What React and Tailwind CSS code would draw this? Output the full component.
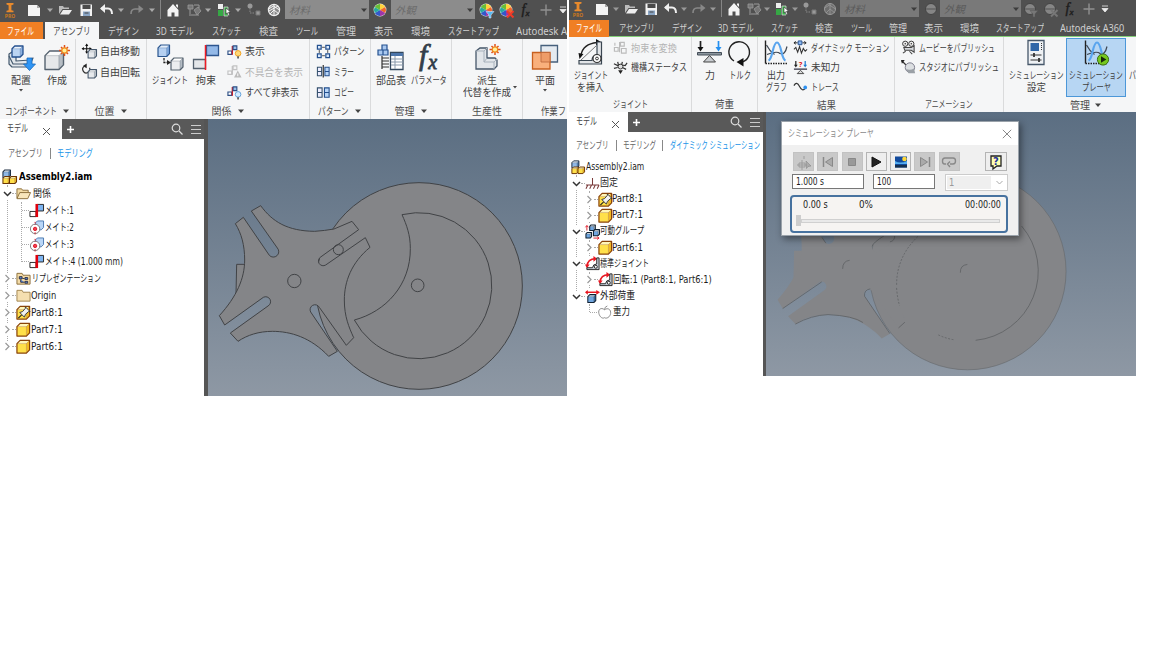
import React, { useLayoutEffect, useRef, useState } from "react";

/* Text squeezed horizontally to the width of its box, like the narrow UI face. */
function Fit({ className = "", children }) {
  const outer = useRef(null);
  const inner = useRef(null);
  const [scale, setScale] = useState(1);
  useLayoutEffect(() => {
    setScale(outer.current.clientWidth / inner.current.offsetWidth);
  }, [children]);
  return (
    <span ref={outer} className={"block shrink-0 whitespace-nowrap " + className}>
      <span ref={inner} className="inline-block origin-left" style={{ transform: `scaleX(${scale})` }}>
        {children}
      </span>
    </span>
  );
}

const Svg = ({ w = 16, h = 16, className = "size-4", children }) => (
  <svg viewBox={`0 0 ${w} ${h}`} className={"block shrink-0 overflow-visible " + className} fill="none">
    {children}
  </svg>
);
const Big = ({ children }) => <Svg w={28} h={28} className="size-7">{children}</Svg>;
const Caret = ({ className = "text-[#444]" }) => (
  <Svg w={8} h={8} className={"size-2 " + className}><path d="M1 2.5h6L4 6z" fill="currentColor" /></Svg>
);
const TinyCaret = () => (
  <Svg w={8} h={8} className="size-2"><path d="M2 3h4L4 5.5z" fill="#444" /></Svg>
);

/* ---------- shared shapes ---------- */
const Cube = ({ x = 0, y = 0, s = 10, fill = "#e6e9ec", top = "#fff", side = "#b4bcc4", stroke = "#44566a", sw = 1.1 }) => {
  const d = s * 0.25;
  const f = s - d;
  return (
    <g strokeLinejoin="round">
      <path d={`M${x} ${y + d}h${f}v${f}h${-f}z`} fill={fill} />
      <path d={`M${x} ${y + d}l${d} ${-d}h${f}l${-d} ${d}z`} fill={top} />
      <path d={`M${x + f} ${y + d}l${d} ${-d}v${f}l${-d} ${d}z`} fill={side} />
      <path d={`M${x} ${y + d}h${f}v${f}M${x + f} ${y + d}l${d} ${-d}`} stroke={stroke} strokeWidth=".7" opacity=".45" />
      <path d={`M${x} ${y + d}l${d} ${-d}h${f}v${f}l${-d} ${d}h${-f}z`} stroke={stroke} strokeWidth={sw} />
    </g>
  );
};
const Spark = ({ x, y }) => (
  <g>
    <path d={`M${x} ${y - 5.500}v11M${x - 5.500} ${y}h11M${x - 3.500} ${y - 3.500}l7 7M${x + 3.500} ${y - 3.500}l-7 7`} stroke="#e0501c" strokeWidth="1.500" />
    <circle cx={x} cy={y} r="2.700" fill="#fff09a" stroke="#f08a1c" strokeWidth="1.200" />
  </g>
);

/* ---------- title bar icons ---------- */
const q = {
  logo: <Svg><path d="M4.5 1h7v1.600L9.400 3.200v5l2.100.6v1.500h-7V8.800l2.100-.6v-5l-2.100-.6z" fill="#e88a2c" /><text x="8" y="16" textAnchor="middle" fontSize="5" fontWeight="700" fill="#c9781f" fontFamily="Noto Sans">PRO</text></Svg>,
  new: <Svg><path d="M2 3h9l3 3v8H2z" fill="#f4f4f4" /><path d="M11 3v3h3z" fill="#aaa" /></Svg>,
  open: <Svg><path d="M2 12V4h4l1 1.500h5V7H5.500z" fill="#bbb" /><path d="M3 12.500L6 8h9l-3 4.500z" fill="#eee" /></Svg>,
  save: <Svg><path d="M2.500 2.500h11.500v11.500H2.500z" fill="#f2f2f2" /><path d="M4.500 3h8v4h-8z" fill="#4a4a4a" /><path d="M5 9.500h7v4.500H5z" fill="#8aa5c4" /><path d="M6.500 11h4" stroke="#444" /></Svg>,
  undo: <Svg><path d="M3 6.500h7q4 0 4 5.500" stroke="#f0f0f0" strokeWidth="2" /><path d="M7 2L2 6.500 7 11z" fill="#f0f0f0" /></Svg>,
  redo: <Svg><path d="M13 7H6q-4 0-4 5" stroke="#888" strokeWidth="1.600" /><path d="M9.500 3l5 4-5 4z" fill="#888" /></Svg>,
  home: <Svg><path d="M2.500 8L8 2l5.500 6v6.500H9.500v-4h-3v4h-4z" fill="#f4f4f4" /><path d="M11 2.500h2V6l-2-2z" fill="#f4f4f4" /></Svg>,
  link: <Svg><path d="M2 3h5v4H2zM8 8l4-3 3 4-4 4z" fill="#777" stroke="#999" strokeWidth=".8" /><path d="M3 13h10M4 7v5M8 3h5v3" stroke="#999" /></Svg>,
  green: <Svg><path d="M2 2h5v5H2z" fill="#eee" /><path d="M2 8h5v6H2z" fill="#36a845" /><path d="M8 5h4v9H8z" fill="#3cb44b" stroke="#ddd" strokeWidth=".7" /><path d="M10 6l4.500 4-2 .3 1.200 3-1.500.4-1-3-1.200 1.300z" fill="#fff" stroke="#333" strokeWidth=".6" /></Svg>,
  tree: <Svg><circle cx="4" cy="4" r="2.500" fill="#999" /><path d="M4 6v5h4" stroke="#888" strokeDasharray="1.500 1" /><path d="M10 9h4v4h-4z" fill="#999" stroke="#777" /></Svg>,
  globe: <Svg><circle cx="8" cy="8" r="5.600" fill="#8a8a8a" stroke="#eee" strokeWidth="1.200" /><path d="M2.500 7l5-3 6 4M4 12l4-4 5 4M8 2v12M3 9l9-5" stroke="#f4f4f4" strokeWidth="1" /></Svg>,
  globeDim: <Svg><circle cx="8" cy="8" r="5.500" fill="#6d6d6d" stroke="#999" /><path d="M2.500 7l5-3 6 4M4 12l4-4 5 4M8 2v12" stroke="#999" strokeWidth=".8" /></Svg>,
  plus: <Svg><path d="M8 2.500v11M2.500 8h11" stroke="#909090" strokeWidth="1.400" /></Svg>,
  fx: <Svg><text x="7.500" y="12" textAnchor="middle" fontSize="14" fontStyle="italic" stroke="#1d1d1d" strokeWidth=".4" fill="#1d1d1d" fontFamily="Liberation Serif">f<tspan fontSize="9" dy="2">x</tspan></text></Svg>,
};
const Ball = ({ dim, mark }) => (
  <Svg>
    {dim ? (
      <g><circle cx="8" cy="8" r="5.500" fill="#858585" stroke="#444" /><path d="M3 8h10" stroke="#6c6c6c" strokeWidth="2" /></g>
    ) : (
      <g>
        <circle cx="8" cy="8" r="6.400" fill="#eee" />
        <path d="M8 8V2A6 6 0 0 1 13.200 5z" fill="#ffd23c" /><path d="M8 8l5.200-3a6 6 0 0 1 0 6z" fill="#f0662a" />
        <path d="M8 8l5.200 3A6 6 0 0 1 8 14z" fill="#9d35a8" /><path d="M8 8v6a6 6 0 0 1-5.200-3z" fill="#3458c8" />
        <path d="M8 8l-5.200 3a6 6 0 0 1 0-6z" fill="#28a9a0" /><path d="M8 8L2.800 5A6 6 0 0 1 8 2z" fill="#69bd36" />
      </g>
    )}
    {mark === "down" && <path d="M8 9.500h8l-3 3.500v3h-2v-3z" fill={dim ? "#777" : "#54b9f2"} stroke={dim ? "#555" : "#eef"} strokeWidth=".5" />}
    {mark === "x" && <path d="M9 9l6.500 6.500m0-6.500L9 15.500" stroke={dim ? "#777" : "#f03a26"} strokeWidth="2" />}
  </Svg>
);
const Slot = ({ c = "", children }) => <div className={"flex shrink-0 items-center " + c}>{children}</div>;
const Combo = ({ c, text, dim }) => (
  <div className={"flex shrink-0 items-center justify-between pl-1 pr-[1px] italic " + (dim ? "bg-[#797979] text-[#5c5c5c] " : "bg-[#8c8c8c] text-[#6c6c6c] ") + c}>
    <Fit className="w-[21px]">{text}</Fit>
    <Caret className="text-[#3c3c3c]" />
  </div>
);
const LC = "text-[#aaa]";

/* ---------- ribbon icons ---------- */
const pairGlyph = (c1 = "#c8202c", c2 = "#2d4f85", f = "#9bc0ec") => (
  <g><path d="M1 7.500h4v3.500H1z" stroke={c2} strokeWidth="1.200" fill="#fff" /><path d="M5.700 2v9.500" stroke={c1} strokeWidth="1.400" /><path d="M6.500 2h4v4h-4z" fill={f} stroke={c2} strokeWidth="1.200" /></g>
);
const bulb = (c, s) => <g><circle cx="11.800" cy="10" r="3" fill={c} stroke={s} strokeWidth="1" /><path d="M11.800 13v2.500" stroke="#555" strokeWidth="1.800" /></g>;
const curves = (
  <g>
    <path d="M3.500 1.500v23" stroke="#222" strokeWidth="1.400" /><path d="M3.500 24.500H26" stroke="#222" strokeWidth="1.400" strokeDasharray="1.500 1" />
    <path d="M4.500 6q3 6 8 9.500M5 15.500q10-4 13-1 5 2 7-7" stroke="#3d4652" strokeWidth="1.200" />
    <path d="M6.500 21.500C11 20 10.500 3.500 15 3.500S19 20 23.500 21.500" stroke="#5aa5ee" strokeWidth="2.200" />
  </g>
);
const ic = {
  place: <Big><path d="M2 10l3-2h4v9l14-1 3-2-4 9H5l-3-3z" fill="#e2e7ec" stroke="#44596e" strokeWidth="1.200" strokeLinejoin="round" /><path d="M2 12l4 8h16" stroke="#44596e" strokeWidth="1.200" /><Cube x={5} y={2} s={11} fill="#bcd5f3" top="#eaf3fd" side="#8bb1e0" stroke="#24508f" sw={1.300} /><path d="M20 14h5v6h3.500L22.500 26.500 16.500 20H20z" fill="#2f95f5" stroke="#1868b8" strokeWidth=".8" /></Big>,
  create: <Big><Cube x={2} y={7} s={18.500} fill="#e6e8ea" top="#fbfbfb" side="#b7bec5" stroke="#55626f" sw={1.400} /><Spark x={21.500} y={6.500} /></Big>,
  move: <Svg><path d="M5 .5v9M.5 5h9" stroke="#111" strokeWidth="1.100" /><path d="M5-.5L3.300 2h3.400zM5 10.500L3.300 8h3.400zM-.5 5L2 3.300v3.400zM10.500 5L8 3.300v3.400z" fill="#111" /><Cube x={6.500} y={6} s={9} /></Svg>,
  rotate: <Svg><path d="M2.500 2.500A3.800 3.800 0 1 0 8 4" stroke="#333" strokeWidth="1.300" /><path d="M5-.5v5L1 2z" fill="#222" /><Cube x={6.500} y={6} s={9} /></Svg>,
  joint: <Big><Cube x={2} y={1} s={11.500} fill="#b5d0f1" top="#e2eefb" side="#7fa9de" stroke="#2a568f" sw={1.200} /><Cube x={15} y={14} s={12} fill="#eceef0" stroke="#55626f" sw={1.200} /><path d="M8 14v4.500h4" stroke="#222" strokeWidth="1.300" strokeDasharray="2.500 1" /><path d="M11 16l4 2.500-4 2.500z" fill="#222" /></Big>,
  constrain: <Big><path d="M1.500 15.500h12v9h-12z" fill="#e4e7ea" stroke="#55626f" strokeWidth="1.300" /><path d="M14.500 1.500h12v10h-12z" fill="#93b9e8" stroke="#2d568f" strokeWidth="1.300" /><path d="M13.500 1v25" stroke="#ee1c25" strokeWidth="1.500" /></Big>,
  show: <Svg>{pairGlyph()}{bulb("#ffd878", "#f2a01e")}</Svg>,
  sick: <Svg><g opacity=".4">{pairGlyph("#777", "#777", "#eee")}</g><path d="M11.500 7l4 7.500h-8z" fill="#bbb" /><path d="M11.500 10v3" stroke="#fff" /></Svg>,
  hide: <Svg>{pairGlyph()}{bulb("#d5ecff", "#5f9ed8")}</Svg>,
  pattern: <Svg><path d="M1.500 1.500h4v4h-4zM10.500 1.500h4v4h-4zM1.500 10.500h4v4h-4zM10.500 10.500h4v4h-4z" stroke="#24508f" strokeWidth="1.300" fill="#dcebfc" /><path d="M6.500 3.500h3M12.500 6.500v3M3.500 6.500v3M6.500 12.500h3" stroke="#444" /></Svg>,
  mirror: <Svg><path d="M1.500 3.500H6v4.500H1.500zM1.500 8H6v4.500H1.500z" stroke="#34506e" strokeWidth="1.100" fill="#eef" /><path d="M9.500 3.500H14V8H9.500zM9.500 8H14v4.500H9.500z" stroke="#24508f" strokeWidth="1.100" fill="#b7d4f6" /><path d="M7.700 1v13.500" stroke="#111" strokeWidth="1.100" /></Svg>,
  copy: <Svg><path d="M1.500 3H6.500v5H1.500zM1.500 8H6.500v5H1.500z" stroke="#34506e" strokeWidth="1.200" fill="#eef" /><path d="M9 3H14v5H9zM9 8H14v5H9z" stroke="#24508f" strokeWidth="1.200" fill="#b7d4f6" /></Svg>,
  bom: <Big><path d="M5 1h5v5H5zM1 6h5v5H1zM6 6h5v5H6z" fill="#a9c8ef" stroke="#24508f" strokeWidth="1.200" /><path d="M5 14h7M5 17h7M5 20h7M5 23h7M5 12v13" stroke="#333" strokeWidth="1.200" /><path d="M13.500 8.500h12.500v17H13.500z" fill="#fff" stroke="#33475c" strokeWidth="1.300" /><path d="M14 9h12v3H14z" fill="#4c75aa" /><path d="M14 15h12M14 18h12M14 21h12M18 12v13" stroke="#8898aa" /></Big>,
  param: <Big><text x="13" y="21" textAnchor="middle" fontSize="30" fontStyle="italic" stroke="#333e4a" strokeWidth=".8" fill="#333e4a" fontFamily="Liberation Serif">f<tspan fontSize="20" dy="4" dx="1">x</tspan></text></Big>,
  derive: <Big><path d="M3 7l4-3h7v10h8l2 2v6l-3 3H3z" fill="#e2e6ea" stroke="#46576a" strokeWidth="1.300" /><path d="M3 7h8v11h10v7M11 7l3-3M11 18l3-4M21 18l3-3" stroke="#a8b2bc" /><Spark x={22} y={5.500} /></Big>,
  plane: <Big><path d="M10 1.500h16.500V18H10z" fill="#e4eaf0" stroke="#46607c" strokeWidth="1.300" /><path d="M1.500 8.500H19V25H1.500z" fill="#f9b07c" stroke="#c8601f" strokeWidth="1.300" /><path d="M10 8.500h9V18h-9z" stroke="#b9653a" strokeWidth=".8" fill="#ee9c68" /></Big>,
  insertJoint: <Big><path d="M4 16Q6 5 20 3.500" stroke="#222" strokeWidth="1.300" /><path d="M1.500 14l5 1-4 5zM19 0l5 3-5 3.500z" fill="#111" /><path d="M4 21L19 7" stroke="#777" /><path d="M2 21.500h13q0-5 5-6V3h4.500v22H2z" stroke="#3a4652" strokeWidth="1.200" fill="#e2e5e8" /><circle cx="20" cy="19.500" r="4" fill="#fff" stroke="#333" strokeWidth="1.200" /><circle cx="20" cy="19.500" r="1.400" stroke="#333" /></Big>,
  convert: <Svg><g stroke="#bbb" strokeWidth="1.200"><path d="M1.500 8h4v4h-4zM7 2v11M8 2.500h4v4H8zM9 9h5v5H9zM2 3v3" /></g></Svg>,
  mech: <Svg><path d="M1 4l4 2 3-1 5 1 2-3M1 9l4-1M14 10l-4-2M5 2l1 4M10 2L9 6" stroke="#333" strokeWidth="1.300" /><circle cx="8" cy="7" r="2.600" fill="#ddd" stroke="#333" /><path d="M5.500 11h5L8 15z" fill="#222" /></Svg>,
  force: <Big><path d="M4.500 2v7" stroke="#222" strokeWidth="1.700" /><path d="M1.500 8h6l-3 4.500z" fill="#111" /><path d="M22.500 2v7" stroke="#2490f0" strokeWidth="1.700" /><path d="M19.500 8h6l-3 4.500z" fill="#2490f0" /><path d="M1.500 13.500h24v2.500h-24z" fill="#8d979f" stroke="#444e58" /><path d="M13.500 16.500l6 6.500h-12z" fill="#c8ccd0" stroke="#444" /></Big>,
  torque: <Big><path d="M8 22A10.300 10.300 0 1 1 16 23" stroke="#222" strokeWidth="1.400" /><path d="M17.500 19v8.500L10.500 23z" fill="#111" /></Big>,
  graph: <Big>{curves}</Big>,
  dyn: <Svg><path d="M1 3h4m5 0h4M3 1.500L1 3l2 1.500M12 1.500L14 3l-2 1.500" stroke="#222" /><path d="M5.500 1h4v4h-4z" fill="#8db8f0" stroke="#24508f" /><path d="M1 10l2-2 2 5 2-6 2 7 2-5 2 3 2-2" stroke="#333" strokeWidth="1.100" /></Svg>,
  unknown: <Svg><path d="M3 1v5" stroke="#222" strokeWidth="1.300" /><path d="M13 1v5" stroke="#1a78d0" strokeWidth="1.300" /><path d="M1 5h4L3 8z" fill="#222" /><path d="M11 5h4l-2 3z" fill="#1a78d0" /><text x="8" y="7.500" textAnchor="middle" fontSize="8" fontWeight="700" fill="#e02020" fontFamily="Noto Sans">?</text><path d="M1 9h14v1.500H1z" fill="#445" /><path d="M8 11l3.500 3.500h-7z" fill="#ddd" stroke="#444" /></Svg>,
  trace: <Svg><path d="M1 7q3-5 6 1t6 2" stroke="#333" strokeWidth="1.300" /><circle cx="13" cy="9" r="2" fill="#2e90f0" /></Svg>,
  movie: <Svg><path d="M3 8h8l3-2v7l-3-2H4zM5 12l-3 2M9 12l3 3" stroke="#444" strokeWidth="1.100" fill="#d5d8dc" /><circle cx="4.500" cy="4" r="2.800" stroke="#333" fill="#eee" /><circle cx="11" cy="4" r="2.800" stroke="#333" fill="#eee" /><circle cx="4.500" cy="4" r=".8" fill="#333" /><circle cx="11" cy="4" r=".8" fill="#333" /></Svg>,
  studio: <Svg><path d="M1 1l5 5" stroke="#333" strokeWidth="1.400" /><path d="M0 0h4L1 4z" fill="#222" /><circle cx="9.500" cy="8" r="5" fill="#dcdfe2" stroke="#778" /><path d="M5 9q4 3 9 0l1 5H8z" fill="#9aa0a6" /></Svg>,
  settings: <Big><path d="M6 1.500h16v24H6z" fill="#eef1f4" stroke="#46576a" strokeWidth="1.300" /><path d="M8.500 4h8.500v8H8.500z" fill="#2f66a8" /><path d="M19.500 4v8" stroke="#333" strokeDasharray="1 1" /><path d="M8.500 16h11M8.500 21h11" stroke="#333" strokeWidth="1.200" /><path d="M12 14v4M17 19v4" stroke="#333" strokeWidth="1.800" /></Big>,
  player: <Big>{curves}<circle cx="21" cy="20.500" r="5.600" fill="#76c81e" stroke="#3a6d10" /><path d="M19 17.300l5.400 3.200-5.400 3.200z" fill="#182808" /></Big>,
};

/* ---------- ribbon parts ---------- */
const Group = ({ c, title, tw, caret, children }) => (
  <div className={"flex shrink-0 flex-col overflow-hidden border-r border-[#dadbdc] " + c}>
    <div className="flex flex-1 items-start">{children}</div>
    <div className="flex h-[16px] shrink-0 items-center justify-center gap-[5px] text-[#4b4b4b]">
      <Fit className={tw}>{title}</Fit>
      {caret && <Caret />}
    </div>
  </div>
);
const BigButton = ({ c = "", icon, lines, drop }) => (
  <div className={"flex shrink-0 flex-col items-center text-[#3f3f3f] " + c}>
    {ic[icon]}
    <div className="mt-[2px] flex flex-col items-center leading-[12px]">
      {lines.map(([t, w]) => <Fit key={t} className={"h-[12px] " + w}>{t}</Fit>)}
      {drop && <TinyCaret />}
    </div>
  </div>
);
const Small = ({ h, icon, text, w, dim }) => (
  <div className={"flex items-center gap-[3px] " + h + (dim ? " text-[#b4b4b4]" : " text-[#3f3f3f]")}>
    <div className="w-[15px]">{React.cloneElement(ic[icon], { className: "size-[15px]" })}</div>
    <Fit className={w}>{text}</Fit>
  </div>
);

/* ---------- tree parts ---------- */
const yellow = { fill: "#ffe04a", top: "#fff6b8", side: "#f2bc22", stroke: "#8a4408" };
const t = {
  asm: <Svg><Cube x={1} y={1} s={8} fill="#8fb8e6" top="#e2effc" side="#4f80b8" stroke="#1c2c40" /><Cube x={1} y={8} s={7.500} {...yellow} stroke="#6a3404" /><Cube x={8} y={8} s={7.500} {...yellow} stroke="#6a3404" /></Svg>,
  open: <Svg><path d="M1 13V3h5l1 1.500h6V7" fill="#f3dba4" stroke="#8a6d3a" /><path d="M1 13.500L4 7h11.500l-3 6.500z" fill="#f8e6bb" stroke="#8a6d3a" /></Svg>,
  folder: <Svg><path d="M1 14V2.500h5.500l1 2H15V14z" fill="#f5dfb0" stroke="#a1844f" /></Svg>,
  rep: <Svg><path d="M1 14V2.500h5.500l1 2H15V14z" fill="#f3dba8" stroke="#8a6d3a" /><path d="M3.500 6h3v2.500h-3zM9.500 7h3v2h-3zM9.500 11h3v2h-3zM5 9v3h4M7 8h2" fill="#5d8bd8" stroke="#223" strokeWidth=".9" /></Svg>,
  part: <Svg><Cube x={1} y={1.500} s={13.500} {...yellow} sw={1.300} /></Svg>,
  pinned: <Svg><Cube x={1} y={1.500} s={13.500} {...yellow} sw={1.300} /><path d="M2.500 14L6 10.500" stroke="#222" strokeWidth="1.200" /><path d="M4 8l5 5 1-3 3.500-3L15 7 10 2v1.500L7 7z" stroke="#333" strokeWidth="1" fill="#f2f2f2" /></Svg>,
  mate: <Svg><path d="M1 9h6.500v5.500H1z" stroke="#222" fill="#fff" /><path d="M9 1.500h6.500v7H9z" fill="#7db4f0" stroke="#222" /><path d="M8.300 1v14" stroke="#e0000c" strokeWidth="2.800" /></Svg>,
  insert: <Svg><path d="M7 3l2-2h6.500v7L13 10.500H7z" fill="#b9d6f7" stroke="#4a78b0" /><circle cx="6.500" cy="9.500" r="5" fill="#fff" stroke="#777" /><circle cx="6.500" cy="9.500" r="1.800" fill="#f04050" stroke="#e01020" /><path d="M6.500 2v3M6.500 13v3" stroke="#e01020" strokeDasharray="1.500 1" /></Svg>,
  ground: <Svg><path d="M8 2v7M1 9.500h14M3 9.500l-2 4M7 9.500l-2 4M11 9.500l-2 4M15 9.500l-2 4" stroke="#7a3a3a" strokeWidth="1.100" /></Svg>,
  moving: <Svg><Cube x={5} y={1} s={6} fill="#6fa6e0" stroke="#123" /><Cube x={1} y={9} s={6} fill="#6fa6e0" stroke="#123" /><Cube x={9} y={6} s={6.500} fill="#6fa6e0" stroke="#123" /><path d="M2 2v5M.5 3.500L2 1.500l1.500 2M9 15h6M13 13.500l2 1.500-2 1.500" stroke="#e0202c" /></Svg>,
  joint: <Svg><path d="M2 11Q3 3 11 3" stroke="#e81822" strokeWidth="1.600" /><path d="M0 9h5l-3 4zM9 0l4 3-4 3z" fill="#e81822" /><path d="M2 14.500h13V2h-2.500v6.500q-4 0-4.500 4H2z" stroke="#222" fill="#c5ced8" /><circle cx="11.500" cy="11.500" r="1.600" fill="#fff" stroke="#222" /></Svg>,
  load: <Svg><Cube x={3} y={6} s={8.500} fill="#6fa6e0" top="#c7def6" side="#3c6ca4" stroke="#123" /><path d="M1 3.500h12" stroke="#e81822" strokeWidth="1.600" /><path d="M12 1l4 2.500L12 6zM3 1L0 3.500 3 6z" fill="#e81822" /></Svg>,
  apple: <Svg><path d="M8 5C4 2 1 5 2 9s4 6 6 4.500C10 15 14 13 14.500 9S12 2.500 8 5zM8 5q0-3 3-4" stroke="#888" fill="#fff" /></Svg>,
};
const Chevron = ({ open }) => (
  <span className="relative -ml-[5px] block w-[9px] shrink-0 bg-white py-[1px]">
    <Svg w={9} h={9} className="size-[9px]">
      {open ? <path d="M1 3l3.500 3.500L8 3" stroke="#333" strokeWidth="1.500" /> : <path d="M2.500 1L6 4.500 2.500 8" stroke="#999" strokeWidth="1.200" />}
    </Svg>
  </span>
);
const Node = ({ h, exp, icon, text, w, gap = "ml-[1px]" }) => (
  <div className={"flex items-center text-[#1c1c1c] " + h}>
    {exp ? <><Chevron open={exp === "open"} /><span className="w-[4px] shrink-0 border-t border-dotted border-[#aaa]" /></> : <span className="w-[7px] shrink-0 border-t border-dotted border-[#aaa]" />}
    {React.cloneElement(t[icon], { className: "size-[15px]" })}
    <Fit className={w + " " + gap}>{text}</Fit>
  </div>
);
const PanelHead = ({ c, tabs = "w-[62px]" }) => (
  <div className={"flex shrink-0 bg-[#595959] " + c}>
    <div className={"flex shrink-0 items-start bg-white pl-[7px] text-[#444] " + tabs}>
      <Fit className="w-[21px] leading-[18px]">モデル</Fit>
      <Svg w={9} h={9} className="ml-[14px] mt-[8px] size-[9px]"><path d="M1 1l7 7M8 1L1 8" stroke="#555" strokeWidth="1" /></Svg>
    </div>
    <Svg w={9} h={9} className="ml-[4px] mt-[6px] size-[9px]"><path d="M4.500 1v7M1 4.500h7" stroke="#fff" strokeWidth="1.600" /></Svg>
    <div className="ml-auto flex items-center gap-[7px] pr-[2px]">
      <Svg w={12} h={12} className="size-3"><circle cx="5" cy="5" r="3.800" stroke="#ddd" strokeWidth="1.200" /><path d="M8 8l3.500 3.500" stroke="#ddd" strokeWidth="1.300" /></Svg>
      <Svg w={12} h={12} className="size-3"><path d="M1 2.500h10M1 6.500h10M1 10.500h10" stroke="#ccc" strokeWidth="1.200" /></Svg>
    </div>
  </div>
);

/* ---------- Geneva mechanism ---------- */
const STAR = "M170 107C205 155 250 183 332 184Q362 182 390 177L444 154 464 179 350 261A14 14 0 0 0 365 285L484 203 498 232C442 278 421 335 421 390 421 440 435 472 449 503L427 526 346 412A14 14 0 0 0 320 426L400 544 374 559C320 502 260 484 205 484 165 484 130 495 102 514L79 489 192 408A14 14 0 0 0 178 382L62 465 46 437C98 380 122 325 122 270 122 225 112 190 94 161L118 142 196 256A14 14 0 0 0 220 234L142 123Z";
function Mechanism({ faint }) {
  const body = "#848588";
  const s = faint ? "none" : "#414346";
  return (
    <g strokeWidth="3" stroke={s} fill={body} strokeLinejoin="round">
      <circle cx="645" cy="348" r="310" stroke={faint ? "#65686c" : s} strokeWidth={faint ? 2 : 3} />
      <path d="M98 283h40v60l-42 27z" />
      {!faint && <path d="M594 134A219 219 0 1 1 451 450C545 425 620 345 619 235 619 195 608 165 594 134z" />}
      <path d={STAR} />
      {faint ? (
        <g fill="none" stroke="#5d6063" strokeWidth="2.500">
          <path d="M815 205A219 219 0 0 1 670 565" />
          <path d="M600 563q-25-4-52-17M421 400q2 30 9 55M421 390q0-90 70-155" strokeDasharray="6 5" />
          <path d="M62 465L185 381M320 426L400 544M320 426q-2-20 18-23M427 526l20-18M102 514q50-28 103-30 80 4 110 25" />
          <path d="M251 340q0-25 22-27M622 352q-1-24 22-26M186 241l12 18M344 269q0-10 40-35M400 255q16-4 15-20" />
        </g>
      ) : (
        <g fill="none"><circle cx="403" cy="239" r="15" /><circle cx="271" cy="333" r="20" /><circle cx="641" cy="346" r="19" /></g>
      )}
    </g>
  );
}

/* ---------- simulation player ---------- */
const PB = ({ on, c = "w-[21px]", children }) => (
  <div className={"flex h-[19px] items-center justify-center border " + (on ? "border-[#b4b4b4] bg-[#eeeeee] " : "border-[#c2c2c2] bg-[#c9c9c9] ") + c}>
    <Svg className="size-[16px]">{children}</Svg>
  </div>
);
function Player() {
  return (
    <div className="absolute left-[15px] top-[9px] flex h-[115px] w-[238px] flex-col border border-[#9aa2aa] bg-[#f0f0f0] font-['DejaVu_Sans','Noto_Sans_CJK_JP',sans-serif] text-[#1c1c1c] shadow-[2px_3px_7px_rgba(0,0,0,0.45)]">
      <div className="flex h-[23px] shrink-0 items-center justify-between bg-white pl-[6px] pr-[6px] text-[#8b8b8b]">
        <Fit className="w-[86px]">シミュレーション プレーヤ</Fit>
        <Svg w={10} h={10} className="size-[10px]"><path d="M.8.800l8.400 8.400M9.200.8L.8 9.200" stroke="#888" /></Svg>
      </div>
      <div className="mt-[7px] flex gap-[3.300px] pl-[11px]">
        <PB><path d="M3 9h6v4H3zM6 6v10M1 11h12M8 2v3" stroke="#999" strokeWidth=".9" /><path d="M10 7l5 5-3 .5-1.500 2z" fill="#aaa" stroke="#888" strokeWidth=".6" /></PB>
        <PB><path d="M3.500 3v10" stroke="#888" strokeWidth="1.500" /><path d="M12.500 3.500L5.500 8l7 4.500z" fill="#aaa" stroke="#888" /></PB>
        <PB><path d="M4.500 4.500h7v7h-7z" fill="#999" stroke="#888" /></PB>
        <PB on><path d="M4 3l9 5-9 5z" fill="#222" stroke="#111" /></PB>
        <PB on><path d="M2 2.500h12v11H2z" fill="#124a9c" /><path d="M2 7q5 3 12 0v3H2z" fill="#54aef0" /><path d="M2 11h12v2.500H2z" fill="#16304e" /><circle cx="11.500" cy="5" r="2.300" fill="#ffd83a" /></PB>
        <PB><path d="M12.500 3v10" stroke="#888" strokeWidth="1.500" /><path d="M3.500 3.500l7 4.500-7 4.500z" fill="#aaa" stroke="#888" /></PB>
        <PB><path d="M5 10H3.500q-2 0-2-3t2.500-3h8q2.500 0 2.500 3t-2.500 3H9M9 7.500L6.500 10 9 13" stroke="#888" strokeWidth="1.400" /></PB>
        <div className="ml-[22px]"><PB on c="w-[22px]"><path d="M3 2h10v10H9l-4 3v-3H3z" fill="#ffffb0" stroke="#222" strokeWidth="1.300" /><text x="8" y="10.500" textAnchor="middle" fontSize="10" fontWeight="700" fill="#2030a0" fontFamily="DejaVu Sans">?</text></PB></div>
      </div>
      <div className="mt-[3px] flex h-[15px] items-start pl-[10px] leading-[13px]">
        <div className="h-[15px] w-[72px] border border-[#777] bg-white pl-[3px]"><Fit className="w-[28px]">1.000 s</Fit></div>
        <div className="ml-[9px] h-[15px] w-[62px] border border-[#777] bg-white pl-[3px]"><Fit className="w-[14px]">100</Fit></div>
        <div className="ml-[10px] flex h-[17px] w-[63px] items-center justify-between border border-[#ccc] bg-white p-[1px] pr-[3px] text-[#999]">
          <div className="h-[13px] w-[44px] bg-[#efefef] pl-[2px]"><Fit className="w-[5px]">1</Fit></div>
          <Svg w={9} h={9} className="size-[9px]"><path d="M1.500 3l3 3 3-3" stroke="#aaa" /></Svg>
        </div>
      </div>
      <div className="ml-[8px] mt-[6px] flex h-[38px] w-[218px] flex-col rounded-[4px] border-2 border-[#47729f] bg-[#f6f4f2] pt-[1px] leading-[13px]">
        <div className="flex pl-[11px]">
          <Fit className="w-[25px]">0.00 s</Fit>
          <Fit className="ml-[31px] w-[14px]">0%</Fit>
          <Fit className="ml-[92px] w-[36px]">00:00:00</Fit>
        </div>
        <div className="mt-[4px] flex h-[11px] items-center pl-[4px]">
          <div className="h-[11px] w-[5px] bg-[#cdcdcd]" />
          <div className="h-[4px] w-[199px] border border-[#d0d0d0] bg-[#e9e9e9]" />
        </div>
      </div>
    </div>
  );
}

const Tab = ({ c, children }) => <Fit className={"text-[#cfcfcf] " + c}>{children}</Fit>;

function LeftWindow() {
  const r = "h-[20.5px]";
  const h = "h-[17px]";
  return (
    <div className="flex h-[396px] w-[567px] shrink-0 flex-col overflow-hidden bg-white">
      <div className="flex h-[22px] shrink-0 items-center bg-[#505050] pb-[3px]">
        <Slot c="ml-[2px]">{q.logo}</Slot><Slot c="ml-2">{q.new}</Slot><Slot c="ml-1"><Caret className={LC} /></Slot>
        <Slot c="ml-[3px]">{q.open}</Slot><Slot c="ml-[5px]">{q.save}</Slot><Slot c="ml-1">{q.undo}</Slot>
        <Slot c="ml-[3px]"><Caret className={LC} /></Slot><Slot c="ml-1">{q.redo}</Slot><Slot c="ml-[3px]"><Caret className={LC} /></Slot>
        <div className="ml-1 h-[19px] w-px shrink-0 bg-[#858585]" />
        <Slot c="ml-1">{q.home}</Slot><Slot c="ml-[5px]">{q.link}</Slot><Slot c="ml-[2px]"><Caret className={LC} /></Slot>
        <Slot c="ml-1">{q.green}</Slot><Slot c="ml-[2px]"><Caret className={LC} /></Slot><Slot c="ml-1">{q.tree}</Slot><Slot c="ml-1">{q.globe}</Slot>
        <Combo c="ml-[3px] h-[19px] w-[84px]" text="材料" />
        <Slot c="ml-[3px]"><Ball /></Slot>
        <Combo c="ml-[3px] h-[19px] w-[84px]" text="外観" />
        <Slot c="ml-[3px]"><Ball mark="down" /></Slot><Slot c="ml-1"><Ball mark="x" /></Slot><Slot c="ml-1">{q.fx}</Slot><Slot c="ml-1">{q.plus}</Slot>
        <Slot c="ml-[5px]"><Svg w={8} h={8} className="size-2"><path d="M1 1h6M1 3.500h6L4 7z" fill="#eee" stroke="#eee" strokeWidth=".8" /></Svg></Slot>
      </div>
      <div className="flex h-[17px] shrink-0 items-center bg-[#505050]">
        <div className="flex h-full w-[43px] items-center bg-[#f07f24] pl-[7px] text-white"><Fit className="w-[27px]">ファイル</Fit></div>
        <div className="ml-[2px] flex h-full w-[54px] items-center bg-[#f5f6f7] pl-[8px] text-[#444]"><Fit className="w-[38px]">アセンブリ</Fit></div>
        <Tab c="ml-[9px] w-[31px]">デザイン</Tab><Tab c="ml-[17px] w-[38px]">3D モデル</Tab><Tab c="ml-[18px] w-[29px]">スケッチ</Tab>
        <Tab c="ml-[18px] w-[19px]">検査</Tab><Tab c="ml-[18px] w-[22px]">ツール</Tab><Tab c="ml-[18px] w-[20px]">管理</Tab>
        <Tab c="ml-[18px] w-[19px]">表示</Tab><Tab c="ml-[18px] w-[19px]">環境</Tab><Tab c="ml-[18px] w-[51px]">スタートアップ</Tab>
        <Tab c="ml-[17px] w-[51px]">Autodesk A</Tab>
      </div>
      <div className="flex h-[80px] shrink-0 bg-[#f5f6f7]">
        <Group c="w-[76px]" title="コンポーネント" tw="w-[52px]" caret>
          <BigButton c="ml-[7px] mt-[5px] w-[28px]" icon="place" lines={[["配置", "w-[20px]"]]} drop />
          <BigButton c="ml-[8px] mt-[5px] w-[28px]" icon="create" lines={[["作成", "w-[20px]"]]} />
        </Group>
        <Group c="w-[71px]" title="位置" tw="w-[20px]" caret>
          <div className="pl-[6px] pt-[2px]"><Small h={r} icon="move" text="自由移動" w="w-[40px]" /><Small h={r} icon="rotate" text="自由回転" w="w-[40px]" /></div>
        </Group>
        <Group c="w-[163px]" title="関係" tw="w-[20px]" caret>
          <BigButton c="ml-[5px] mt-[5px] w-[36px]" icon="joint" lines={[["ジョイント", "w-[36px]"]]} />
          <BigButton c="ml-[4px] mt-[5px] w-[28px]" icon="constrain" lines={[["拘束", "w-[20px]"]]} />
          <div className="pl-[7px] pt-[2px]"><Small h={r} icon="show" text="表示" w="w-[20px]" /><Small h={r} icon="sick" text="不具合を表示" w="w-[58px]" dim /><Small h={r} icon="hide" text="すべて非表示" w="w-[54px]" /></div>
        </Group>
        <Group c="w-[61px]" title="パターン" tw="w-[31px]" caret>
          <div className="pl-[6px] pt-[2px]"><Small h={r} icon="pattern" text="パターン" w="w-[31px]" /><Small h={r} icon="mirror" text="ミラー" w="w-[20px]" /><Small h={r} icon="copy" text="コピー" w="w-[20px]" /></div>
        </Group>
        <Group c="w-[81px]" title="管理" tw="w-[20px]" caret>
          <BigButton c="ml-[5px] mt-[5px] w-[30px]" icon="bom" lines={[["部品表", "w-[30px]"]]} />
          <BigButton c="ml-[5px] mt-[5px] w-[36px]" icon="param" lines={[["パラメータ", "w-[36px]"]]} />
        </Group>
        <Group c="w-[71px]" title="生産性" tw="w-[30px]">
          <BigButton c="ml-[11px] mt-[5px] w-[48px]" icon="derive" lines={[["派生", "w-[20px]"], ["代替を作成", "w-[48px]"]]} />
          <div className="mt-[44px] w-[8px]"><TinyCaret /></div>
        </Group>
        <div className="flex w-[44px] shrink-0 flex-col">
          <div className="flex flex-1 items-start"><BigButton c="ml-[8px] mt-[5px] w-[28px]" icon="plane" lines={[["平面", "w-[20px]"]]} drop /></div>
          <div className="flex h-[16px] items-center pl-[18px] text-[#4b4b4b]"><Fit className="w-[25px]">作業フ</Fit></div>
        </div>
      </div>
      <div className="flex flex-1">
        <div className="flex w-[204px] shrink-0 flex-col">
          <PanelHead c="h-[20px]" />
          <div className="mt-[7px] flex h-[14px] items-center pl-[8px] text-[#666]">
            <Fit className="w-[35px]">アセンブリ</Fit><div className="ml-[7px] h-[11px] w-px bg-[#888]" /><Fit className="ml-[6px] w-[36px] text-[#1a94e8]">モデリング</Fit>
          </div>
          <div className="mt-[8px] flex h-[17px] items-center pl-[2px] font-bold text-black">{React.cloneElement(t.asm, { className: "size-[15px]" })}<Fit className="ml-[2px] w-[73px] font-['DejaVu_Sans','Noto_Sans_CJK_JP',sans-serif]">Assembly2.iam</Fit></div>
          <div className="ml-[7px] h-[162px] border-l border-dotted border-[#aaa] font-['DejaVu_Sans','Noto_Sans_CJK_JP',sans-serif]">
            <Node h={h} exp="open" icon="open" text="関係" w="w-[18px]" gap="ml-[2px]" />
            <div className="ml-[13px] h-[60px] border-l border-dotted border-[#aaa]">
              <Node h={h} icon="mate" text="メイト:1" w="w-[29px]" /><Node h={h} icon="insert" text="メイト:2" w="w-[29px]" />
              <Node h={h} icon="insert" text="メイト:3" w="w-[29px]" /><Node h={h} icon="mate" text="メイト:4 (1.000 mm)" w="w-[78px]" />
            </div>
            <div className="mt-[8px]">
              <Node h={h} exp="c" icon="rep" text="リプレゼンテーション" w="w-[69px]" /><Node h={h} exp="c" icon="folder" text="Origin" w="w-[25px]" gap="ml-0" />
              <Node h={h} exp="c" icon="pinned" text="Part8:1" w="w-[32px]" gap="ml-0" /><Node h={h} exp="c" icon="part" text="Part7:1" w="w-[32px]" gap="ml-0" /><Node h={h} exp="c" icon="part" text="Part6:1" w="w-[32px]" gap="ml-0" />
            </div>
          </div>
        </div>
        <div className="w-[4px] shrink-0 bg-[#555]" />
        <div className="flex-1 bg-linear-to-b from-[#5b6e82] to-[#8e98a4]">
          <svg viewBox="12 -153 1077 831" className="block h-[277px] w-[359px]"><Mechanism /></svg>
        </div>
      </div>
    </div>
  );
}

function RightWindow() {
  const r = "h-[19.5px]";
  const h = "h-[16.15px]";
  const D = "text-[#999]";
  return (
    <div className="ml-[2px] flex h-[376px] w-[567px] shrink-0 flex-col overflow-hidden bg-white">
      <div className="flex h-[20px] shrink-0 items-center bg-[#505050] pb-[3px]">
        <Slot c="ml-[1px]">{q.logo}</Slot><Slot c="ml-2">{q.new}</Slot><Slot c="ml-[2px]"><Caret className={D} /></Slot>
        <Slot c="ml-[3px]">{q.open}</Slot><Slot c="ml-1">{q.save}</Slot><Slot c="ml-[3px]">{q.undo}</Slot>
        <Slot c="ml-[2px]"><Caret className={D} /></Slot><Slot c="ml-[3px]">{q.redo}</Slot><Slot c="ml-[2px]"><Caret className={D} /></Slot>
        <div className="ml-1 h-[17px] w-px shrink-0 bg-[#858585]" />
        <Slot c="ml-1">{q.home}</Slot><Slot c="ml-1">{q.link}</Slot><Slot c="ml-px"><Caret className={D} /></Slot>
        <Slot c="ml-[3px]">{q.green}</Slot><Slot c="ml-px"><Caret className={D} /></Slot><Slot c="ml-[3px]">{q.tree}</Slot><Slot c="ml-1">{q.globeDim}</Slot>
        <Combo dim c="ml-[2px] h-[17px] w-[79px]" text="材料" />
        <Slot c="ml-1"><Ball dim /></Slot>
        <Combo dim c="ml-px h-[17px] w-[81px]" text="外観" />
        <Slot c="ml-px"><Ball dim mark="down" /></Slot><Slot c="ml-1"><Ball dim mark="x" /></Slot><Slot c="ml-1">{q.fx}</Slot><Slot c="ml-[3px]">{q.plus}</Slot>
        <Slot c="ml-1"><Svg w={8} h={8} className="size-2"><path d="M1 1h6M1 3.500h6L4 7z" fill="#eee" stroke="#eee" strokeWidth=".8" /></Svg></Slot>
      </div>
      <div className="flex h-[17px] shrink-0 items-center border-b border-[#83cf78] bg-[#505050]">
        <div className="flex h-[17px] w-[40px] items-center bg-[#f07f24] pl-[7px] text-white"><Fit className="w-[26px]">ファイル</Fit></div>
        <Tab c="ml-[10px] w-[36px]">アセンブリ</Tab><Tab c="ml-[17px] w-[30px]">デザイン</Tab><Tab c="ml-[16px] w-[36px]">3D モデル</Tab>
        <Tab c="ml-[17px] w-[27px]">スケッチ</Tab><Tab c="ml-[17px] w-[18px]">検査</Tab><Tab c="ml-[18px] w-[21px]">ツール</Tab>
        <Tab c="ml-[17px] w-[18px]">管理</Tab><Tab c="ml-[17px] w-[19px]">表示</Tab><Tab c="ml-[17px] w-[19px]">環境</Tab>
        <Tab c="ml-[17px] w-[48px]">スタートアップ</Tab><Tab c="ml-[16px] w-[64px]">Autodesk A360</Tab>
      </div>
      <div className="flex h-[75px] shrink-0 bg-[#f5f6f7]">
        <Group c="w-[123px]" title="ジョイント" tw="w-[35px]">
          <BigButton c="ml-[4px] mt-[2px] w-[35px]" icon="insertJoint" lines={[["ジョイント", "w-[34px]"], ["を挿入", "w-[27px]"]]} />
          <div className="pl-[5px] pt-[1px]"><Small h={r} icon="convert" text="拘束を変換" w="w-[46px]" dim /><Small h={r} icon="mech" text="機構ステータス" w="w-[56px]" /></div>
        </Group>
        <Group c="w-[66px]" title="荷重" tw="w-[19px]">
          <BigButton c="ml-[4px] mt-[2px] w-[28px]" icon="force" lines={[["力", "w-[10px]"]]} />
          <BigButton c="ml-[2px] mt-[2px] w-[28px]" icon="torque" lines={[["トルク", "w-[22px]"]]} />
        </Group>
        <Group c="w-[137px]" title="結果" tw="w-[19px]">
          <BigButton c="ml-[4px] mt-[2px] w-[28px]" icon="graph" lines={[["出力", "w-[18px]"], ["グラフ", "w-[21px]"]]} />
          <div className="pl-[3px] pt-[1px]"><Small h={r} icon="dyn" text="ダイナミック モーション" w="w-[78px]" /><Small h={r} icon="unknown" text="未知力" w="w-[29px]" /><Small h={r} icon="trace" text="トレース" w="w-[28px]" /></div>
        </Group>
        <Group c="w-[109px]" title="アニメーション" tw="w-[48px]">
          <div className="pl-[6px] pt-[1px]"><Small h={r} icon="movie" text="ムービーをパブリッシュ" w="w-[76px]" /><Small h={r} icon="studio" text="スタジオにパブリッシュ" w="w-[80px]" /></div>
        </Group>
        <div className="flex w-[132px] shrink-0 flex-col overflow-hidden">
          <div className="flex flex-1 items-start">
            <BigButton c="ml-[4px] mt-[2px] w-[56px]" icon="settings" lines={[["シミュレーション", "w-[55px]"], ["設定", "w-[19px]"]]} />
            <div className="ml-[2px] mt-[1px] h-[59px] w-[60px] shrink-0 border border-[#4c97d8] bg-[#b7d6f3]">
              <BigButton icon="player" lines={[["シミュレーション", "w-[54px]"], ["プレーヤ", "w-[29px]"]]} />
            </div>
            <Fit className="ml-[3px] mt-[31px] w-[7px] text-[#3f3f3f]">パ</Fit>
          </div>
          <div className="flex h-[16px] items-center gap-[4px] pl-[66px] text-[#4b4b4b]"><Fit className="w-[20px]">管理</Fit><Caret /></div>
        </div>
      </div>
      <div className="flex flex-1">
        <div className="flex w-[194px] shrink-0 flex-col">
          <PanelHead c="h-[20px]" tabs="w-[59px]" />
          <div className="mt-[6px] flex h-[14px] items-center pl-[7px] text-[#666]">
            <Fit className="w-[33px]">アセンブリ</Fit><div className="ml-[7px] h-[11px] w-px bg-[#888]" /><Fit className="ml-[6px] w-[33px]">モデリング</Fit><div className="ml-[6px] h-[11px] w-px bg-[#888]" /><Fit className="ml-[7px] w-[90px] text-[#1a94e8]">ダイナミック シミュレーション</Fit>
          </div>
          <div className="mt-[7px] flex h-[16px] shrink-0 items-center pl-[2px] text-[#1c1c1c]">{React.cloneElement(t.asm, { className: "size-[14px]" })}<Fit className="ml-[1px] w-[58px] font-['DejaVu_Sans','Noto_Sans_CJK_JP',sans-serif]">Assembly2.iam</Fit></div>
          <div className="ml-[7px] h-[122px] border-l border-dotted border-[#aaa] font-['DejaVu_Sans','Noto_Sans_CJK_JP',sans-serif]">
            <Node h={h} exp="open" icon="ground" text="固定" w="w-[18px]" gap="ml-0" />
            <div className="ml-[12px] border-l border-dotted border-[#aaa]"><Node h={h} exp="c" icon="pinned" text="Part8:1" w="w-[31px]" gap="-ml-px" /><Node h={h} exp="c" icon="part" text="Part7:1" w="w-[31px]" gap="-ml-px" /></div>
            <Node h={h} exp="open" icon="moving" text="可動グループ" w="w-[44px]" gap="ml-0" />
            <div className="ml-[12px] border-l border-dotted border-[#aaa]"><Node h={h} exp="c" icon="part" text="Part6:1" w="w-[31px]" gap="-ml-px" /></div>
            <Node h={h} exp="open" icon="joint" text="標準ジョイント" w="w-[49px]" gap="ml-0" />
            <div className="ml-[12px] border-l border-dotted border-[#aaa]"><Node h={h} exp="c" icon="joint" text="回転:1 (Part8:1, Part6:1)" w="w-[99px]" gap="ml-0" /></div>
            <Node h={h} exp="open" icon="load" text="外部荷重" w="w-[35px]" gap="ml-0" />
            <div className="ml-[12px] h-[8px] border-l border-dotted border-[#aaa]"><Node h={h} icon="apple" text="重力" w="w-[17px]" /></div>
          </div>
        </div>
        <div className="w-[3px] shrink-0 bg-[#555]" />
        <div className="relative flex-1 bg-linear-to-b from-[#5b6e82] to-[#8e98a4]">
          <svg viewBox="12 -354 1110 792" className="block h-[264px] w-[370px]"><g transform="translate(3 -207) scale(.952)"><Mechanism faint /></g></svg>
          <Player />
        </div>
      </div>
    </div>
  );
}

export default function App() {
  return (
    <div className="flex h-[648px] w-[1152px] items-start overflow-hidden bg-white font-['Noto_Sans','Noto_Sans_CJK_JP',sans-serif] text-[10px] leading-[14px]">
      <LeftWindow />
      <RightWindow />
    </div>
  );
}
